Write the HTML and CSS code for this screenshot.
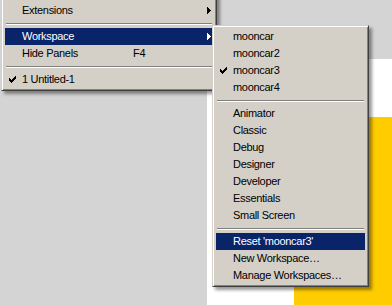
FILE: index.html
```html
<!DOCTYPE html>
<html>
<head>
<meta charset="utf-8">
<link rel="stylesheet" href="styles.css">
</head>
<body>
<div class="canvas">
  <div class="doc"><div class="art"></div></div>
</div>

<div class="menu main">
  <div class="row ghost"><span class="ic"></span><span class="lbl">Arrange</span></div>
  <div class="row"><span class="ic"></span><span class="lbl">Extensions</span><span class="key"></span><span class="arr"><svg width="4" height="7" shape-rendering="crispEdges"><rect x="0" y="0" width="1" height="7"/><rect x="1" y="1" width="1" height="5"/><rect x="2" y="2" width="1" height="3"/><rect x="3" y="3" width="1" height="1"/></svg></span></div>
  <div class="sep"></div>
  <div class="row hl"><span class="ic"></span><span class="lbl">Workspace</span><span class="key"></span><span class="arr"><svg width="4" height="7" shape-rendering="crispEdges"><rect x="0" y="0" width="1" height="7"/><rect x="1" y="1" width="1" height="5"/><rect x="2" y="2" width="1" height="3"/><rect x="3" y="3" width="1" height="1"/></svg></span></div>
  <div class="row"><span class="ic"></span><span class="lbl">Hide Panels</span><span class="key">F4</span><span class="arr"></span></div>
  <div class="sep"></div>
  <div class="row"><span class="ic"><svg width="7" height="7" shape-rendering="crispEdges"><rect x="6" y="0" width="1" height="3"/><rect x="5" y="1" width="1" height="3"/><rect x="4" y="2" width="1" height="3"/><rect x="3" y="3" width="1" height="3"/><rect x="2" y="4" width="1" height="3"/><rect x="1" y="3" width="1" height="3"/><rect x="0" y="2" width="1" height="3"/></svg></span><span class="lbl">1 Untitled-1</span><span class="key"></span><span class="arr"></span></div>
</div>

<div class="menu sub">
  <div class="row"><span class="ic"></span><span class="lbl">mooncar</span></div>
  <div class="row"><span class="ic"></span><span class="lbl">mooncar2</span></div>
  <div class="row"><span class="ic"><svg width="7" height="7" shape-rendering="crispEdges"><rect x="6" y="0" width="1" height="3"/><rect x="5" y="1" width="1" height="3"/><rect x="4" y="2" width="1" height="3"/><rect x="3" y="3" width="1" height="3"/><rect x="2" y="4" width="1" height="3"/><rect x="1" y="3" width="1" height="3"/><rect x="0" y="2" width="1" height="3"/></svg></span><span class="lbl">mooncar3</span></div>
  <div class="row"><span class="ic"></span><span class="lbl">mooncar4</span></div>
  <div class="sep"></div>
  <div class="row"><span class="ic"></span><span class="lbl">Animator</span></div>
  <div class="row"><span class="ic"></span><span class="lbl">Classic</span></div>
  <div class="row"><span class="ic"></span><span class="lbl">Debug</span></div>
  <div class="row"><span class="ic"></span><span class="lbl">Designer</span></div>
  <div class="row"><span class="ic"></span><span class="lbl">Developer</span></div>
  <div class="row"><span class="ic"></span><span class="lbl">Essentials</span></div>
  <div class="row"><span class="ic"></span><span class="lbl">Small Screen</span></div>
  <div class="sep"></div>
  <div class="row hl"><span class="ic"></span><span class="lbl">Reset 'mooncar3'</span></div>
  <div class="row"><span class="ic"></span><span class="lbl">New Workspace…</span></div>
  <div class="row"><span class="ic"></span><span class="lbl">Manage Workspaces…</span></div>
</div>
</body>
</html>
```

FILE: styles.css
```css
html, body {
  margin: 0;
  padding: 0;
}
body {
  width: 392px;
  height: 305px;
  overflow: hidden;
  position: relative;
  background: #d4d4d4;
  font-family: "Liberation Sans", Arial, sans-serif;
  font-size: 11px;
  letter-spacing: -0.3px;
  color: #000;
}
.canvas {
  height: 305px;
  box-sizing: border-box;
  padding: 59px 0 0 207px;
}
.doc {
  height: 100%;
  box-sizing: border-box;
  padding: 58px 0 0 87px;
  background: #fff;
}
.art {
  height: 100%;
  background: #ffcc00;
}
.menu {
  position: absolute;
  background: #d4d0c8;
  border: 1px solid;
  border-color: #d4d0c8 #404040 #404040 #d4d0c8;
  box-shadow: inset 1px 1px #fff, inset -1px -1px #808080, 3px 3px 3px rgba(0, 0, 0, 0.4);
  padding: 2px 3px;
}
.main {
  left: 1px;
  top: -18px;
  width: 208px;
}
.sub {
  left: 212px;
  top: 25px;
  width: 149px;
}
.row {
  display: flex;
  align-items: center;
  height: 17px;
  line-height: 17px;
  white-space: nowrap;
}
.ghost {
  visibility: hidden;
}
.hl {
  background: #0a246a;
  color: #fff;
}
.hl svg {
  fill: #fff;
}
.ic {
  width: 17px;
  flex: none;
  display: flex;
  align-items: center;
  padding-left: 4px;
  box-sizing: border-box;
}
.ic svg, .arr svg {
  display: block;
}
.main .lbl {
  width: 111px;
  flex: none;
}
.key {
  flex: 1;
}
.arr {
  flex: none;
  width: 4px;
  margin-right: 2px;
}
.sep {
  height: 0;
  margin: 4px 1px 3px;
  border-top: 1px solid #808080;
  border-bottom: 1px solid #fff;
}
```
